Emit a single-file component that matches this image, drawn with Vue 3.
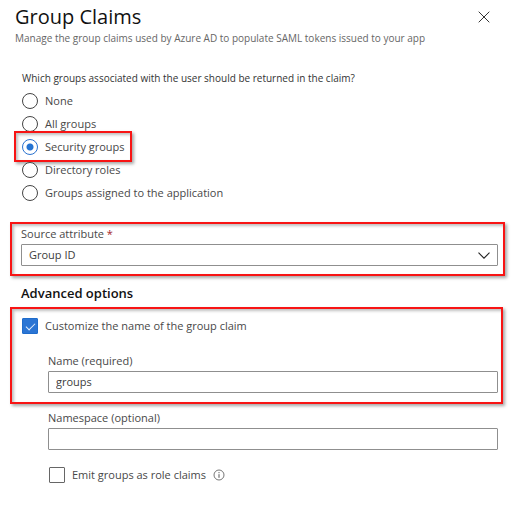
<script setup>
import { ref } from 'vue'

const options = ['None', 'All groups', 'Security groups', 'Directory roles', 'Groups assigned to the application']
const selected = ref('Security groups')
const source = ref('Group ID')
const customize = ref(true)
const name = ref('groups')
const namespace = ref('')
const emitRoles = ref(false)
</script>

<template>
  <main class="panel">
    <header class="header">
      <div>
        <h1>Group Claims</h1>
        <p class="subtitle">Manage the group claims used by Azure AD to populate SAML tokens issued to your app</p>
      </div>
      <button class="close" type="button" aria-label="Close">
        <svg viewBox="0 0 12 12" width="12" height="12">
          <path d="M.7.7l10.6 10.6M11.3.7L.7 11.3" fill="none" stroke="#333" stroke-width="1" />
        </svg>
      </button>
    </header>

    <fieldset class="groups">
      <legend>Which groups associated with the user should be returned in the claim?</legend>
      <label v-for="o in options" :key="o" class="choice" :class="{ marked: o === 'Security groups' }">
        <input v-model="selected" type="radio" name="groups" :value="o" />
        <span>{{ o }}</span>
      </label>
    </fieldset>

    <section class="callout source">
      <label class="caption" for="source">Source attribute <span class="star">*</span></label>
      <div class="select-wrap">
        <select id="source" v-model="source" class="field">
          <option>Group ID</option>
        </select>
        <svg class="chevron" viewBox="0 0 12 7" width="12" height="7">
          <path d="M.5.7L6 6.2L11.5.7" fill="none" stroke="#222" stroke-width="1.1" />
        </svg>
      </div>
    </section>

    <h2>Advanced options</h2>

    <section class="callout custom">
      <label class="check">
        <input v-model="customize" type="checkbox" />
        <span>Customize the name of the group claim</span>
      </label>
      <div class="nested">
        <label class="caption" for="name">Name (required)</label>
        <input id="name" v-model="name" class="field" type="text" />
      </div>
    </section>

    <section class="more">
      <label class="caption" for="namespace">Namespace (optional)</label>
      <input id="namespace" v-model="namespace" class="field" type="text" />
      <div class="emit">
        <label class="check">
          <input v-model="emitRoles" type="checkbox" />
          <span>Emit groups as role claims</span>
        </label>
        <svg class="info" viewBox="0 0 12 12" width="12" height="12">
          <circle cx="6" cy="6" r="5" fill="none" stroke="#666" stroke-width=".9" />
          <path d="M6 5.2v3.6M6 3.1v1.1" stroke="#555" stroke-width="1" />
        </svg>
      </div>
    </section>
  </main>
</template>

<style>
body {
  background: #fff;
}
</style>

<style scoped>
.panel {
  padding-top: 4px;
  font: 11px/16px "Segoe UI", "Open Sans", "Noto Sans", sans-serif;
  color: #484848;
}
h1,
h2,
p {
  margin: 0;
}
.header {
  display: flex;
  justify-content: space-between;
  align-items: flex-start;
  padding: 0 22px 0 15px;
}
h1 {
  font-size: 20px;
  line-height: 26px;
  font-weight: 500;
  color: #111;
}
.subtitle {
  color: #666;
  font-size: 10px;
  white-space: nowrap;
}
.close {
  display: flex;
  margin-top: 7px;
  padding: 0;
  border: 0;
  background: none;
}
.groups {
  display: flex;
  flex-direction: column;
  align-items: flex-start;
  margin: 24px 14px 0 22px;
  padding: 0;
  border: 0;
}
legend {
  margin-bottom: 3px;
  padding: 0;
  color: #333;
  font-size: 10px;
}
.choice {
  position: relative;
  display: flex;
  align-items: center;
  gap: 7px;
  height: 23px;
}
.marked::after {
  content: "";
  position: absolute;
  inset: -4px -7px -4px -8px;
  border: 2px solid #f81414;
  box-shadow: 2px 2px 3px rgba(0, 0, 0, .35), inset 2px 2px 3px rgba(0, 0, 0, .25);
  pointer-events: none;
}
input[type="radio"],
input[type="checkbox"] {
  appearance: none;
  flex: none;
  box-sizing: border-box;
  width: 16px;
  height: 16px;
  margin: 0;
  border: 1px solid #444;
  background: #fff;
}
input[type="radio"] {
  border-radius: 50%;
}
input[type="radio"]:checked {
  border-color: #2a72cf;
  background: radial-gradient(circle, #2473d2 3px, #fff 4px);
}
input[type="checkbox"] {
  border-color: #666;
  border-radius: 1px;
}
input[type="checkbox"]:checked {
  display: grid;
  place-items: center;
  border-color: #1f6ccb;
  background: #2b75d4;
}
input[type="checkbox"]:checked::before {
  content: "";
  box-sizing: border-box;
  width: 9px;
  height: 5px;
  border: solid #e4effc;
  border-width: 0 0 1px 1px;
  transform: translateY(-1px) rotate(-45deg);
}
.callout {
  margin-left: 10px;
  border: 2px solid #f81414;
  box-shadow: 2px 2px 3px rgba(0, 0, 0, .35), inset 2px 2px 3px rgba(0, 0, 0, .25);
}
.source {
  margin-top: 18px;
  margin-right: 7px;
  padding: 2px 5px 8px 9px;
}
.caption {
  display: block;
  margin-bottom: 2px;
}
.star {
  color: #a4262c;
}
.field {
  display: block;
  box-sizing: border-box;
  width: 100%;
  height: 22px;
  margin: 0;
  padding: 0 7px;
  border: 1px solid #8f8f8f;
  border-radius: 1px;
  background: #fff;
  color: #3c3c3c;
  font: inherit;
}
input.field {
  padding-bottom: 2px;
}
select.field {
  appearance: none;
}
.select-wrap {
  display: grid;
  align-items: center;
}
.select-wrap > * {
  grid-area: 1 / 1;
}
.chevron {
  justify-self: end;
  margin-right: 8px;
  pointer-events: none;
}
h2 {
  margin: 9px 21px 0;
  font-size: 13px;
  line-height: 16px;
  font-weight: 600;
  color: #111;
}
.custom {
  margin-top: 6px;
  margin-right: 9px;
  padding: 9px 3px 9px 10px;
}
.check {
  display: flex;
  align-items: center;
  gap: 7px;
}
.nested {
  margin-top: 19px;
  padding-left: 26px;
}
.more {
  margin: 6px 14px 0 48px;
}
.emit {
  display: flex;
  align-items: center;
  gap: 7px;
  margin-top: 17px;
  padding-left: 1px;
}
</style>
